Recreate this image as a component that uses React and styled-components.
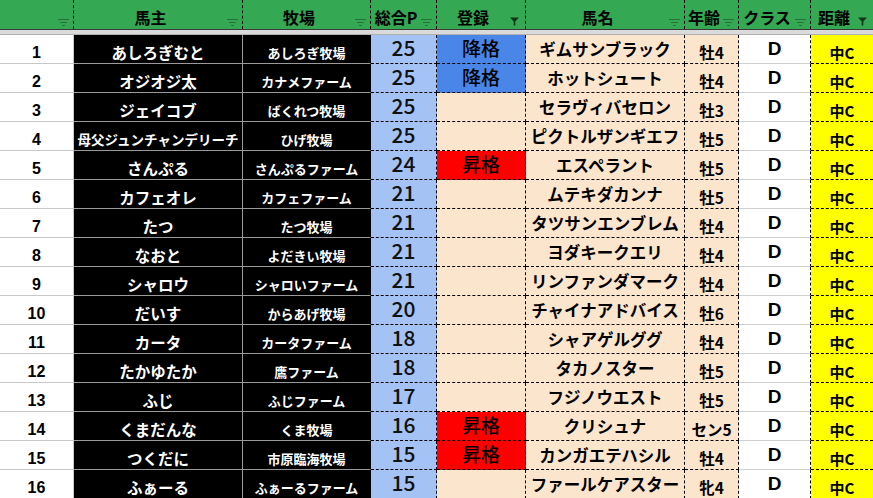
import React from "react";
import styled, { createGlobalStyle, css } from "styled-components";

const GlobalStyle = createGlobalStyle`
  html, body { margin: 0; padding: 0; background: #ffffff; overflow: hidden; }
  * { box-sizing: border-box; }
`;

const COLS = "74px 169px 128px 66px 89px 159px 54px 72px 62px";

const Sheet = styled.div`
  width: 873px;
  height: 498px;
  overflow: hidden;
  display: grid;
  grid-template-columns: ${COLS};
  grid-template-rows: 29px 6px repeat(16, 29px);
  font-family: "Noto Sans CJK JP", "Noto Sans", sans-serif;
  font-weight: 700;
  color: #000;
`;

const HeaderCell = styled.div`
  background: #34a853;
  display: flex;
  align-items: flex-end;
  border-right: ${(p) => (p.$last ? "none" : "1px dashed #000")};
`;

const HeaderLabel = styled.span`
  flex: 1;
  text-align: center;
  font-size: 16px;
  line-height: 1.1;
  padding-bottom: 2px;
  white-space: nowrap;
`;

const FilterIcon = styled.svg`
  flex: none;
  width: 11px;
  height: ${(p) => (p.$active ? "9px" : "7px")};
  margin: 0 ${(p) => (p.$active ? "5px" : "4px")} 3px 0;
`;

const Divider = styled.div`
  grid-column: 1 / -1;
  border-top: 1px solid #3a3a3a;
  border-bottom: 1px solid #b0b0b0;
  background: #dadada;
`;

const cellBase = css`
  display: flex;
  align-items: flex-end;
  justify-content: center;
  line-height: 1.3;
  white-space: nowrap;
`;

const RowNum = styled.div`
  ${cellBase};
  background: #fff;
  font-family: "Liberation Sans", Arial, sans-serif;
  font-size: 16px;
  line-height: 1.2;
  padding-bottom: 1px;
  border-right: 1px solid #c8c8c8;
  border-bottom: 1px solid #c8c8c8;
`;

const OwnerCell = styled.div`
  ${cellBase};
  background: #000;
  color: #fff;
  font-size: ${(p) => (p.$small ? "13.5px" : "15.5px")};
  padding-bottom: 1px;
  border-right: 1px solid #9a9a9a;
  border-bottom: 1px solid #9a9a9a;
`;

const FarmCell = styled.div`
  ${cellBase};
  background: #000;
  color: #fff;
  font-size: 13px;
  padding-bottom: 1px;
  border-right: 1px solid #000;
  border-bottom: 1px solid #9a9a9a;
`;

const PointCell = styled.div`
  ${cellBase};
  background: #a4c2f4;
  color: #111;
  font-size: 21px;
  font-weight: 500;
  line-height: 1.2;
  padding-bottom: 3px;
  border-right: 1px dashed #000;
  border-bottom: 1px dashed #000;
`;

const REG_BG = { 降格: "#4a86e8", 昇格: "#ff0000" };

const RegCell = styled.div`
  ${cellBase};
  background: ${(p) => REG_BG[p.$status] || "#fce5cd"};
  font-size: 19px;
  font-weight: 500;
  line-height: 1.2;
  padding-bottom: 3px;
  border-right: 1px dashed #000;
  border-bottom: 1px dashed #000;
`;

const HorseCell = styled.div`
  ${cellBase};
  background: #fce5cd;
  font-size: 16.5px;
  padding-bottom: 2.5px;
  border-right: 1px dashed #000;
  border-bottom: 1px dashed #000;
`;

const AgeCell = styled.div`
  ${cellBase};
  background: #fce5cd;
  font-size: 15.5px;
  padding-bottom: 1px;
  border-right: 1px dashed #000;
  border-bottom: 1px dashed #000;
`;

const ClassCell = styled.div`
  ${cellBase};
  background: #fff;
  font-family: "Liberation Sans", Arial, sans-serif;
  font-size: 19px;
  line-height: 1.2;
  padding-bottom: 2px;
  border-right: 1px dashed #000;
  border-bottom: 1px solid #d0d0d0;
`;

const DistCell = styled.div`
  ${cellBase};
  background: #ffff00;
  font-size: 15px;
  padding-bottom: 1px;
  border-bottom: 1px dashed #000;
`;

const Filter = ({ active }) =>
  active ? (
    <FilterIcon $active viewBox="0 0 11 9">
      <path d="M1 0.5 H10 L6.3 4.5 V8.5 H4.7 V4.5 Z" fill="#12351c" />
    </FilterIcon>
  ) : (
    <FilterIcon viewBox="0 0 11 7">
      <g stroke="#2a6b3b" strokeWidth="1" opacity="0.9">
        <line x1="0" y1="0.5" x2="11" y2="0.5" />
        <line x1="2" y1="3.5" x2="9" y2="3.5" />
        <line x1="4" y1="6.5" x2="7" y2="6.5" />
      </g>
    </FilterIcon>
  );

const HEADERS = [
  { label: "" },
  { label: "馬主" },
  { label: "牧場" },
  { label: "総合P" },
  { label: "登録", active: true },
  { label: "馬名" },
  { label: "年齢" },
  { label: "クラス" },
  { label: "距離", active: true },
];

const ROWS = [
  ["あしろぎむと", "あしろぎ牧場", 25, "降格", "ギムサンブラック", "牡4"],
  ["オジオジ太", "カナメファーム", 25, "降格", "ホットシュート", "牡4"],
  ["ジェイコブ", "ばくれつ牧場", 25, "", "セラヴィバセロン", "牡3"],
  ["母父ジュンチャンデリーチ", "ひげ牧場", 25, "", "ピクトルザンギエフ", "牡5"],
  ["さんぷる", "さんぷるファーム", 24, "昇格", "エスペラント", "牡5"],
  ["カフェオレ", "カフェファーム", 21, "", "ムテキダカンナ", "牡5"],
  ["たつ", "たつ牧場", 21, "", "タツサンエンブレム", "牡4"],
  ["なおと", "よだきい牧場", 21, "", "ヨダキークエリ", "牡4"],
  ["シャロウ", "シャロいファーム", 21, "", "リンファンダマーク", "牡4"],
  ["だいす", "からあげ牧場", 20, "", "チャイナアドバイス", "牡6"],
  ["カータ", "カータファーム", 18, "", "シャアゲルググ", "牡4"],
  ["たかゆたか", "鷹ファーム", 18, "", "タカノスター", "牡5"],
  ["ふじ", "ふじファーム", 17, "", "フジノウエスト", "牡5"],
  ["くまだんな", "くま牧場", 16, "昇格", "クリシュナ", "セン5"],
  ["つくだに", "市原臨海牧場", 15, "昇格", "カンガエテハシル", "牡4"],
  ["ふぁーる", "ふぁーるファーム", 15, "", "ファールケアスター", "牝4"],
];

export default function App() {
  return (
    <>
      <GlobalStyle />
      <Sheet>
        {HEADERS.map((h, i) => (
          <HeaderCell key={i} $last={i === HEADERS.length - 1}>
            <HeaderLabel>{h.label}</HeaderLabel>
            <Filter active={h.active} />
          </HeaderCell>
        ))}
        <Divider />
        {ROWS.map((r, i) => (
          <React.Fragment key={i}>
            <RowNum>{i + 1}</RowNum>
            <OwnerCell $small={r[0].length > 10}>{r[0]}</OwnerCell>
            <FarmCell>{r[1]}</FarmCell>
            <PointCell>{r[2]}</PointCell>
            <RegCell $status={r[3]}>{r[3]}</RegCell>
            <HorseCell>{r[4]}</HorseCell>
            <AgeCell>{r[5]}</AgeCell>
            <ClassCell>D</ClassCell>
            <DistCell>中C</DistCell>
          </React.Fragment>
        ))}
      </Sheet>
    </>
  );
}
